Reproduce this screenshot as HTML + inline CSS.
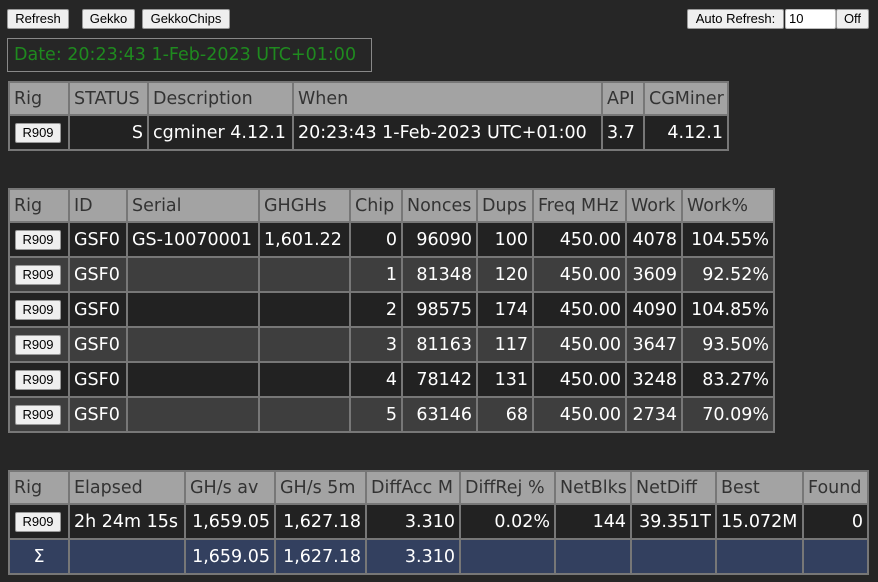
<!DOCTYPE html>
<html><head><meta charset="utf-8"><style>
body{margin:0;background:#262626;width:878px;height:582px;overflow:hidden;font-family:"DejaVu Sans","Liberation Sans",sans-serif;position:relative}
.btn{position:absolute;top:9px;height:20px;box-sizing:border-box;background:#efefef;border:1px solid #999;border-radius:2px;font:13px "Liberation Sans",sans-serif;color:#000;text-align:center;line-height:18px}
.date{position:absolute;left:7px;top:38px;width:365px;height:34px;box-sizing:border-box;border:1px solid #888;color:#1f8a1f;font-size:17.5px;line-height:32px;padding-left:6px;white-space:nowrap}
table{position:absolute;border-collapse:collapse;table-layout:fixed;font-size:17.5px;color:#fff}
td,th{border:2px solid #777;padding:0 4px;white-space:nowrap;overflow:hidden}
th{background:#a3a3a3;color:#333;font-weight:normal;text-align:left;height:31px}
td{background:#222;text-align:right;height:33px}
tr.g td{background:#3e3e3e}
tr.s td{background:#33405f}
td.l{text-align:left}
td.c{text-align:center}
.r{display:inline-block;width:46px;height:20px;box-sizing:border-box;background:#efefef;border:1px solid #999;border-radius:2px;color:#000;font:13px "Liberation Sans",sans-serif;line-height:18px;text-align:center;vertical-align:middle}
td.rig{text-align:left;padding-left:5px}
</style></head><body>
<div class="btn" style="left:7px;width:62px">Refresh</div>
<div class="btn" style="left:82px;width:53px">Gekko</div>
<div class="btn" style="left:142px;width:88px">GekkoChips</div>
<div class="btn" style="left:687px;width:97px">Auto Refresh:</div>
<div class="btn" style="left:785px;width:51px;background:#fff;text-align:left;padding-left:3px;border-color:#bbb">10</div>
<div class="btn" style="left:836px;width:33px">Off</div>
<div class="date">Date: 20:23:43 1-Feb-2023 UTC+01:00</div>

<table style="left:8px;top:81px;width:719px">
<colgroup><col style="width:60px"><col style="width:79px"><col style="width:145px"><col style="width:309px"><col style="width:42px"><col style="width:84px"></colgroup>
<tr><th>Rig</th><th>STATUS</th><th>Description</th><th>When</th><th>API</th><th>CGMiner</th></tr>
<tr><td class="rig"><span class="r">R909</span></td><td>S</td><td class="l">cgminer 4.12.1</td><td class="l">20:23:43 1-Feb-2023 UTC+01:00</td><td class="l">3.7</td><td>4.12.1</td></tr>
</table>

<table style="left:8px;top:188px;width:765px">
<colgroup><col style="width:60px"><col style="width:58px"><col style="width:132px"><col style="width:91px"><col style="width:52px"><col style="width:75px"><col style="width:56px"><col style="width:93px"><col style="width:56px"><col style="width:92px"></colgroup>
<tr><th>Rig</th><th>ID</th><th>Serial</th><th>GHGHs</th><th>Chip</th><th>Nonces</th><th>Dups</th><th>Freq MHz</th><th>Work</th><th>Work%</th></tr>
<tr><td class="rig"><span class="r">R909</span></td><td class="l">GSF0</td><td class="l">GS-10070001</td><td class="l">1,601.22</td><td>0</td><td>96090</td><td>100</td><td>450.00</td><td>4078</td><td>104.55%</td></tr>
<tr class="g"><td class="rig"><span class="r">R909</span></td><td class="l">GSF0</td><td></td><td></td><td>1</td><td>81348</td><td>120</td><td>450.00</td><td>3609</td><td>92.52%</td></tr>
<tr><td class="rig"><span class="r">R909</span></td><td class="l">GSF0</td><td></td><td></td><td>2</td><td>98575</td><td>174</td><td>450.00</td><td>4090</td><td>104.85%</td></tr>
<tr class="g"><td class="rig"><span class="r">R909</span></td><td class="l">GSF0</td><td></td><td></td><td>3</td><td>81163</td><td>117</td><td>450.00</td><td>3647</td><td>93.50%</td></tr>
<tr><td class="rig"><span class="r">R909</span></td><td class="l">GSF0</td><td></td><td></td><td>4</td><td>78142</td><td>131</td><td>450.00</td><td>3248</td><td>83.27%</td></tr>
<tr class="g"><td class="rig"><span class="r">R909</span></td><td class="l">GSF0</td><td></td><td></td><td>5</td><td>63146</td><td>68</td><td>450.00</td><td>2734</td><td>70.09%</td></tr>
</table>

<table style="left:8px;top:470px;width:859px">
<colgroup><col style="width:60px"><col style="width:116px"><col style="width:90px"><col style="width:91px"><col style="width:94px"><col style="width:95px"><col style="width:76px"><col style="width:85px"><col style="width:87px"><col style="width:65px"></colgroup>
<tr><th>Rig</th><th>Elapsed</th><th>GH/s av</th><th>GH/s 5m</th><th>DiffAcc M</th><th>DiffRej %</th><th>NetBlks</th><th>NetDiff</th><th>Best</th><th>Found</th></tr>
<tr><td class="rig"><span class="r">R909</span></td><td class="l">2h 24m 15s</td><td>1,659.05</td><td>1,627.18</td><td>3.310</td><td>0.02%</td><td>144</td><td>39.351T</td><td class="l">15.072M</td><td>0</td></tr>
<tr class="s"><td class="c">Σ</td><td></td><td>1,659.05</td><td>1,627.18</td><td>3.310</td><td></td><td></td><td></td><td></td><td></td></tr>
</table>
</body></html>
